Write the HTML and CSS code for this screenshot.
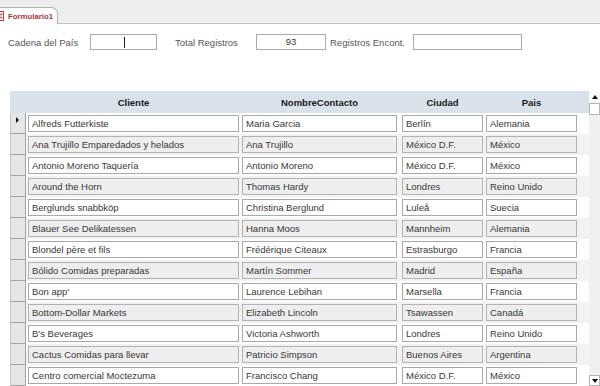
FILE: index.html
```html
<!DOCTYPE html>
<html lang="es">
<head>
<meta charset="UTF-8">
<title>Formulario1</title>
<link rel="stylesheet" href="styles.css">
</head>
<body>
  <div class="top-strip">
    <div class="doc-tab">
      <svg class="tab-icon" width="9" height="10" viewBox="0 0 9 10">
        <rect x="0.5" y="0.5" width="8" height="9" fill="#f4dede" stroke="#b4474b"/>
        <rect x="2" y="3" width="5" height="1" fill="#b4474b"/>
        <rect x="2" y="6" width="5" height="1" fill="#b4474b"/>
      </svg>
      <span class="tab-name">Formulario1</span>
    </div>
  </div>

  <div class="filter-bar">
    <span class="filter-label lbl-cadena">Cadena del País</span>
    <div class="field field-cadena"><span class="caret"></span></div>
    <span class="filter-label lbl-total">Total Registros</span>
    <div class="field field-total">93</div>
    <span class="filter-label lbl-encont">Registros Encont.</span>
    <div class="field field-encont"></div>
  </div>

  <div class="sheet">
    <div class="sheet-grid">
      <div class="sheet-head">
        <div class="sel-head"></div>
        <div class="hcell c1">Cliente</div>
        <div class="hcell c2">NombreContacto</div>
        <div class="hcell c3">Ciudad</div>
        <div class="hcell c4">Pais</div>
      </div>

      <div class="sheet-row">
        <div class="sel current"><span class="pointer"></span></div>
        <div class="cell c1">Alfreds Futterkiste</div>
        <div class="cell c2">Maria Garcia</div>
        <div class="cell c3">Berlín</div>
        <div class="cell c4">Alemania</div>
      </div>
      <div class="sheet-row alt">
        <div class="sel"></div>
        <div class="cell c1">Ana Trujillo Emparedados y helados</div>
        <div class="cell c2">Ana Trujillo</div>
        <div class="cell c3">México D.F.</div>
        <div class="cell c4">México</div>
      </div>
      <div class="sheet-row">
        <div class="sel"></div>
        <div class="cell c1">Antonio Moreno Taquería</div>
        <div class="cell c2">Antonio Moreno</div>
        <div class="cell c3">México D.F.</div>
        <div class="cell c4">México</div>
      </div>
      <div class="sheet-row alt">
        <div class="sel"></div>
        <div class="cell c1">Around the Horn</div>
        <div class="cell c2">Thomas Hardy</div>
        <div class="cell c3">Londres</div>
        <div class="cell c4">Reino Unido</div>
      </div>
      <div class="sheet-row">
        <div class="sel"></div>
        <div class="cell c1">Berglunds snabbköp</div>
        <div class="cell c2">Christina Berglund</div>
        <div class="cell c3">Luleå</div>
        <div class="cell c4">Suecia</div>
      </div>
      <div class="sheet-row alt">
        <div class="sel"></div>
        <div class="cell c1">Blauer See Delikatessen</div>
        <div class="cell c2">Hanna Moos</div>
        <div class="cell c3">Mannheim</div>
        <div class="cell c4">Alemania</div>
      </div>
      <div class="sheet-row">
        <div class="sel"></div>
        <div class="cell c1">Blondel père et fils</div>
        <div class="cell c2">Frédérique Citeaux</div>
        <div class="cell c3">Estrasburgo</div>
        <div class="cell c4">Francia</div>
      </div>
      <div class="sheet-row alt">
        <div class="sel"></div>
        <div class="cell c1">Bólido Comidas preparadas</div>
        <div class="cell c2">Martín Sommer</div>
        <div class="cell c3">Madrid</div>
        <div class="cell c4">España</div>
      </div>
      <div class="sheet-row">
        <div class="sel"></div>
        <div class="cell c1">Bon app'</div>
        <div class="cell c2">Laurence Lebihan</div>
        <div class="cell c3">Marsella</div>
        <div class="cell c4">Francia</div>
      </div>
      <div class="sheet-row alt">
        <div class="sel"></div>
        <div class="cell c1">Bottom-Dollar Markets</div>
        <div class="cell c2">Elizabeth Lincoln</div>
        <div class="cell c3">Tsawassen</div>
        <div class="cell c4">Canadá</div>
      </div>
      <div class="sheet-row">
        <div class="sel"></div>
        <div class="cell c1">B's Beverages</div>
        <div class="cell c2">Victoria Ashworth</div>
        <div class="cell c3">Londres</div>
        <div class="cell c4">Reino Unido</div>
      </div>
      <div class="sheet-row alt">
        <div class="sel"></div>
        <div class="cell c1">Cactus Comidas para llevar</div>
        <div class="cell c2">Patricio Simpson</div>
        <div class="cell c3">Buenos Aires</div>
        <div class="cell c4">Argentina</div>
      </div>
      <div class="sheet-row">
        <div class="sel"></div>
        <div class="cell c1">Centro comercial Moctezuma</div>
        <div class="cell c2">Francisco Chang</div>
        <div class="cell c3">México D.F.</div>
        <div class="cell c4">México</div>
      </div>
    </div>

    <div class="vscroll">
      <div class="vs-up"><span class="arrow-up"></span></div>
      <div class="vs-thumb"></div>
      <div class="vs-track"></div>
      <div class="vs-down"><span class="arrow-down"></span></div>
    </div>
  </div>
</body>
</html>
```

FILE: styles.css
```css
body {
  margin: 0;
  width: 600px;
  height: 386px;
  overflow: hidden;
  background: #fff;
  font-family: "Liberation Sans", Arial, sans-serif;
  font-size: 9.5px;
}

/* tab strip */
.top-strip {
  height: 23px;
  background: #eeeeee;
  border-bottom: 1px solid #c4c4c4;
  display: flex;
  align-items: flex-end;
}

.doc-tab {
  box-sizing: border-box;
  width: 64px;
  height: 17px;
  margin-left: -6px;
  margin-bottom: -1px;
  background: #fff;
  border: 1px solid #b3b3b3;
  border-bottom: none;
  border-top-right-radius: 7px;
  display: flex;
  align-items: center;
  gap: 4px;
}

.tab-icon {
  display: block;
}

.tab-name {
  font-size: 7.8px;
  font-weight: bold;
  color: #a4373a;
}

/* filter fields */
.filter-bar {
  display: flex;
  align-items: center;
  height: 16px;
  margin-top: 10px;
  padding-left: 8px;
  color: #555;
}

.filter-label {
  white-space: nowrap;
}

.lbl-cadena {
  width: 82px;
}

.lbl-total {
  width: 81px;
  margin-left: 18px;
}

.lbl-encont {
  width: 83px;
  margin-left: 4px;
}

.field {
  box-sizing: border-box;
  height: 16px;
  border: 1px solid #a9a9a9;
  background: #fff;
  position: relative;
}

.field-cadena {
  width: 67px;
}

.field-total {
  width: 70px;
  text-align: center;
  line-height: 14px;
  color: #333;
}

.field-encont {
  width: 109px;
}

.caret {
  position: absolute;
  left: 33px;
  top: 2px;
  width: 1px;
  height: 11px;
  background: #222;
}

/* datasheet */
.sheet {
  display: flex;
  margin-top: 41px;
  padding-left: 10px;
}

.sheet-grid {
  width: 579px;
}

.sheet-head,
.sheet-row {
  display: grid;
  grid-template-columns: 16px 213px 158px 86px 94px;
  align-items: center;
}

.sheet-head {
  height: 22px;
  background: #d9e1ea;
  font-weight: bold;
  color: #1a1a1a;
}

.hcell {
  text-align: center;
  white-space: nowrap;
}

.sheet-row {
  height: 21px;
}

.sheet-row.alt {
  background: #f2f2f2;
}

.sel {
  align-self: stretch;
  box-sizing: border-box;
  background: #e6e6e6;
  border-right: 1px solid #a3a3a3;
  border-bottom: 1px solid #a3a3a3;
  border-left: 1px solid #c8c8c8;
}

.pointer {
  display: block;
  width: 0;
  height: 0;
  margin: 4px 0 0 5px;
  border-top: 3px solid transparent;
  border-bottom: 3px solid transparent;
  border-left: 3px solid #111;
}

.cell {
  box-sizing: border-box;
  height: 17px;
  padding-left: 3px;
  line-height: 15px;
  border: 1px solid #a9a9a9;
  background: #fff;
  color: #383838;
  white-space: nowrap;
  overflow: hidden;
}

.alt .cell {
  background: #eeeeee;
  border-color: #b3b3b3;
}

.c1 {
  margin-left: 2px;
  width: 211px;
}

.c2 {
  margin-left: 3px;
  width: 155px;
}

.c3 {
  margin-left: 5px;
  width: 81px;
}

.c4 {
  margin-left: 3px;
  width: 91px;
}

/* scroll bar */
.vscroll {
  width: 11px;
  height: 295px;
  background: #f0f0f0;
  display: flex;
  flex-direction: column;
}

.vs-up {
  height: 12px;
  background: #fafafa;
  display: flex;
  justify-content: center;
  align-items: center;
}

.vs-thumb {
  box-sizing: border-box;
  height: 12px;
  background: #fff;
  border: 1px solid #b5b5b5;
}

.vs-track {
  flex: 1;
}

.vs-down {
  box-sizing: border-box;
  height: 11px;
  background: #fff;
  border: 1px solid #b5b5b5;
  display: flex;
  justify-content: center;
  align-items: center;
}

.arrow-up,
.arrow-down {
  display: block;
  width: 0;
  height: 0;
  border-left: 3px solid transparent;
  border-right: 3px solid transparent;
}

.arrow-up {
  border-bottom: 4px solid #111;
}

.arrow-down {
  border-top: 4px solid #111;
}
```
